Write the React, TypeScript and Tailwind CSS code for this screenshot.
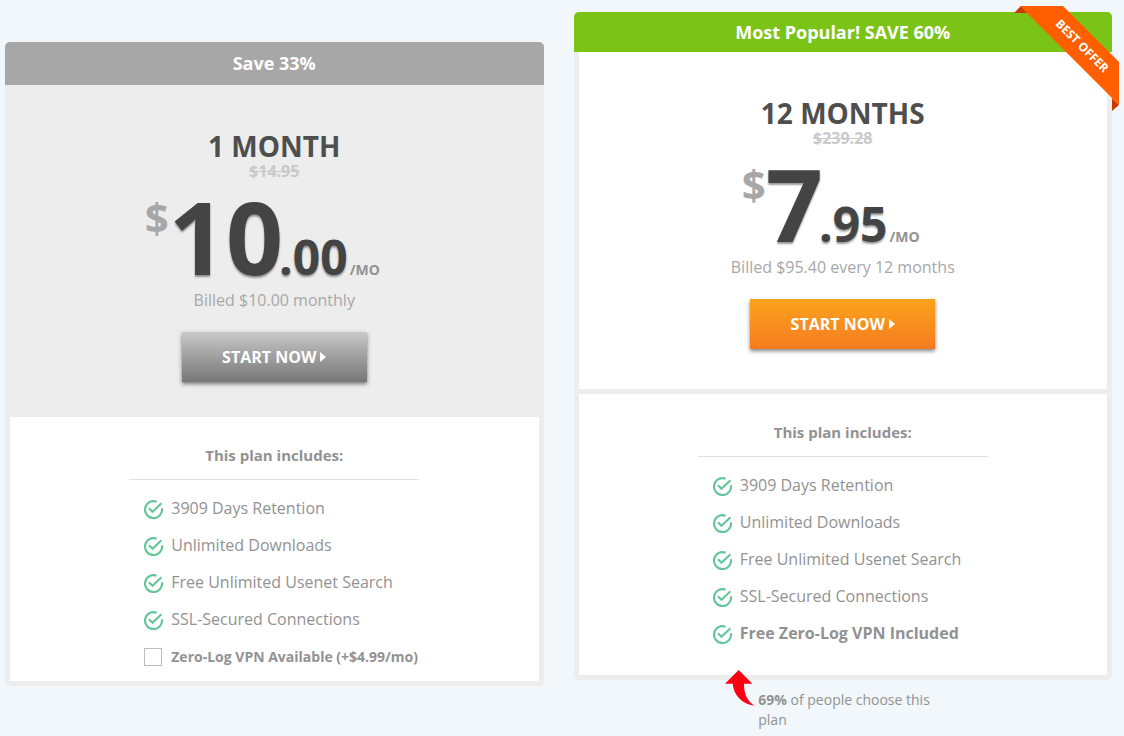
import React from "react";
import { clsx } from "clsx";

// ─── CheckIcon ────────────────────────────────────────────────────────────
function CheckIcon() {
  return (
    <svg width="19" height="19" viewBox="0 0 19 19" fill="none" className="relative top-px shrink-0" aria-hidden="true">
      <g stroke="#63c699" strokeWidth="2.1">
        <path d="M12.6 1.7A8.5 8.5 0 1 0 17.9 8.2" />
        <path d="M4.9 8.3l3.6 3.5L17.4 3.2" />
      </g>
    </svg>
  );
}

// ─── Ribbon ───────────────────────────────────────────────────────────────
function Ribbon() {
  return (
    <svg width="105" height="106" viewBox="0 0 105 106" className="absolute -top-[6px] -right-[7px]">
      <path d="M0 7L7 0l7 7z" fill="#c73b00" />
      <path d="M98 92l7 7-7 6z" fill="#c73b00" />
      <path d="M6 0h43l56 56v43z" fill="#ff5f00" />
      <text
        x="68"
        y="44"
        transform="rotate(45 68 40)"
        textAnchor="middle"
        fill="#fff"
        className="font-['Open_Sans',sans-serif] text-[12px] font-bold"
      >
        BEST OFFER
      </text>
    </svg>
  );
}

// ─── PlanCard ─────────────────────────────────────────────────────────────
interface PlanProps {
  banner: string;
  title: string;
  oldPrice: string;
  whole: string;
  cents: string;
  billed: string;
  features: string[];
  highlight?: string;
  addon?: string;
  popular?: boolean;
}

function PlanCard({
  banner, title, oldPrice, whole, cents, billed, features, highlight, addon, popular = false,
}: PlanProps) {
  return (
    <section className="relative rounded-[5px] bg-[#ededed]">
      <div
        className={clsx(
          "rounded-t-[5px] text-center text-[18px] font-bold text-white",
          popular ? "bg-[#7bc317] leading-[40px]" : "bg-[#a7a7a7] leading-[43px]",
        )}
      >
        {banner}
      </div>
      {popular && <Ribbon />}

      <div className={clsx("mx-[5px] flex flex-col items-center pt-[46px]", popular ? "bg-white pb-10" : "pb-[35px]")}>
        <h2 className="text-[28px] leading-[30px] font-bold text-[#4e4e4e]">{title}</h2>
        <del className="text-[16px] leading-[20px] font-bold text-[#c9c9c9]">{oldPrice}</del>
        <div className="mt-[5px] flex items-baseline pr-6 text-[100px] leading-[100px] font-bold text-[#444]">
          <span className="mt-[10px] self-start text-[42px] leading-[42px] text-[#a7a7a7]">$</span>
          <span className="[text-shadow:0_2px_2px_rgba(0,0,0,0.4)]">{whole}</span>
          <span className="-ml-1 text-[48px] leading-[48px] [text-shadow:0_2px_2px_rgba(0,0,0,0.4)]">{cents}</span>
          <span className="ml-[2px] text-[14px] leading-[20px] text-[#929292]">/MO</span>
        </div>
        <p className="mt-[2px] text-[16px] leading-[24px] text-[#a7a7a7]">{billed}</p>
        <button
          type="button"
          className={clsx(
            "mt-5 flex h-[50px] w-[185px] cursor-pointer items-center justify-center gap-1 bg-linear-to-b text-[16px] font-bold text-white shadow-[0_2px_4px_rgba(0,0,0,0.5)]",
            popular ? "from-[#faa31c] to-[#f57b20]" : "from-[#c9c9c9] to-[#777]",
          )}
        >
          START NOW
          <svg width="6" height="10" viewBox="0 0 6 10" fill="currentColor" aria-hidden="true">
            <path d="M0 0l6 5-6 5z" />
          </svg>
        </button>
      </div>

      <div className={clsx("px-[5px] pb-[5px]", popular && "pt-[5px]")}>
        <div className={clsx("bg-white pt-[26px]", popular ? "pb-[23px]" : "pb-[6px]")}>
          <div className="mx-auto w-[290px]">
            <h3 className="border-b border-[#e2e2e2] pb-3 text-center text-[15px] leading-[24px] font-bold text-[#929292]">
              This plan includes:
            </h3>
            <ul className="mt-[10px] pl-[15px] text-[16px] leading-[37px] whitespace-nowrap text-[#929292]">
              {features.map((feature) => (
                <li key={feature} className="flex items-center gap-2">
                  <CheckIcon />
                  {feature}
                </li>
              ))}
              {highlight && (
                <li className="flex items-center gap-2 font-bold">
                  <CheckIcon />
                  {highlight}
                </li>
              )}
              {addon && (
                <li>
                  <label className="flex cursor-pointer items-center gap-[9px] text-[14px] font-bold">
                    <input
                      type="checkbox"
                      className="size-[18px] shrink-0 appearance-none border border-[#bdbdbd] bg-white checked:bg-[#63c699]"
                    />
                    {addon}
                  </label>
                </li>
              )}
            </ul>
          </div>
        </div>
      </div>
    </section>
  );
}

// ─── PopularityNote ───────────────────────────────────────────────────────
function PopularityNote() {
  return (
    <div className="relative mx-auto mt-[10px] w-[235px] pr-4 pl-[33px] text-[14px] leading-[20px] text-[#929292]">
      <svg width="30" height="37" viewBox="0 0 30 37" className="absolute -top-[20px] left-0" aria-hidden="true">
        <path d="M13.7 0L27.3 13.8H19C19 24 22 31 29.5 35.8C17 34 8.5 25 7.7 13.8H0z" fill="#ff0012" />
      </svg>
      <strong>69%</strong> of people choose this plan
    </div>
  );
}

const FEATURES = [
  "3909 Days Retention",
  "Unlimited Downloads",
  "Free Unlimited Usenet Search",
  "SSL-Secured Connections",
];

export default function App() {
  return (
    <main className="min-h-screen bg-[#f1f7fa] pr-3 pl-[5px] font-['Open_Sans',sans-serif]">
      <div className="grid grid-cols-2 items-start gap-[30px]">
        <div className="pt-[42px]">
          <PlanCard
            banner="Save 33%"
            title="1 MONTH"
            oldPrice="$14.95"
            whole="10"
            cents=".00"
            billed="Billed $10.00 monthly"
            features={FEATURES}
            addon="Zero-Log VPN Available (+$4.99/mo)"
          />
        </div>
        <div className="pt-3">
          <PlanCard
            popular
            banner="Most Popular! SAVE 60%"
            title="12 MONTHS"
            oldPrice="$239.28"
            whole="7"
            cents=".95"
            billed="Billed $95.40 every 12 months"
            features={FEATURES}
            highlight="Free Zero-Log VPN Included"
          />
          <PopularityNote />
        </div>
      </div>
    </main>
  );
}
